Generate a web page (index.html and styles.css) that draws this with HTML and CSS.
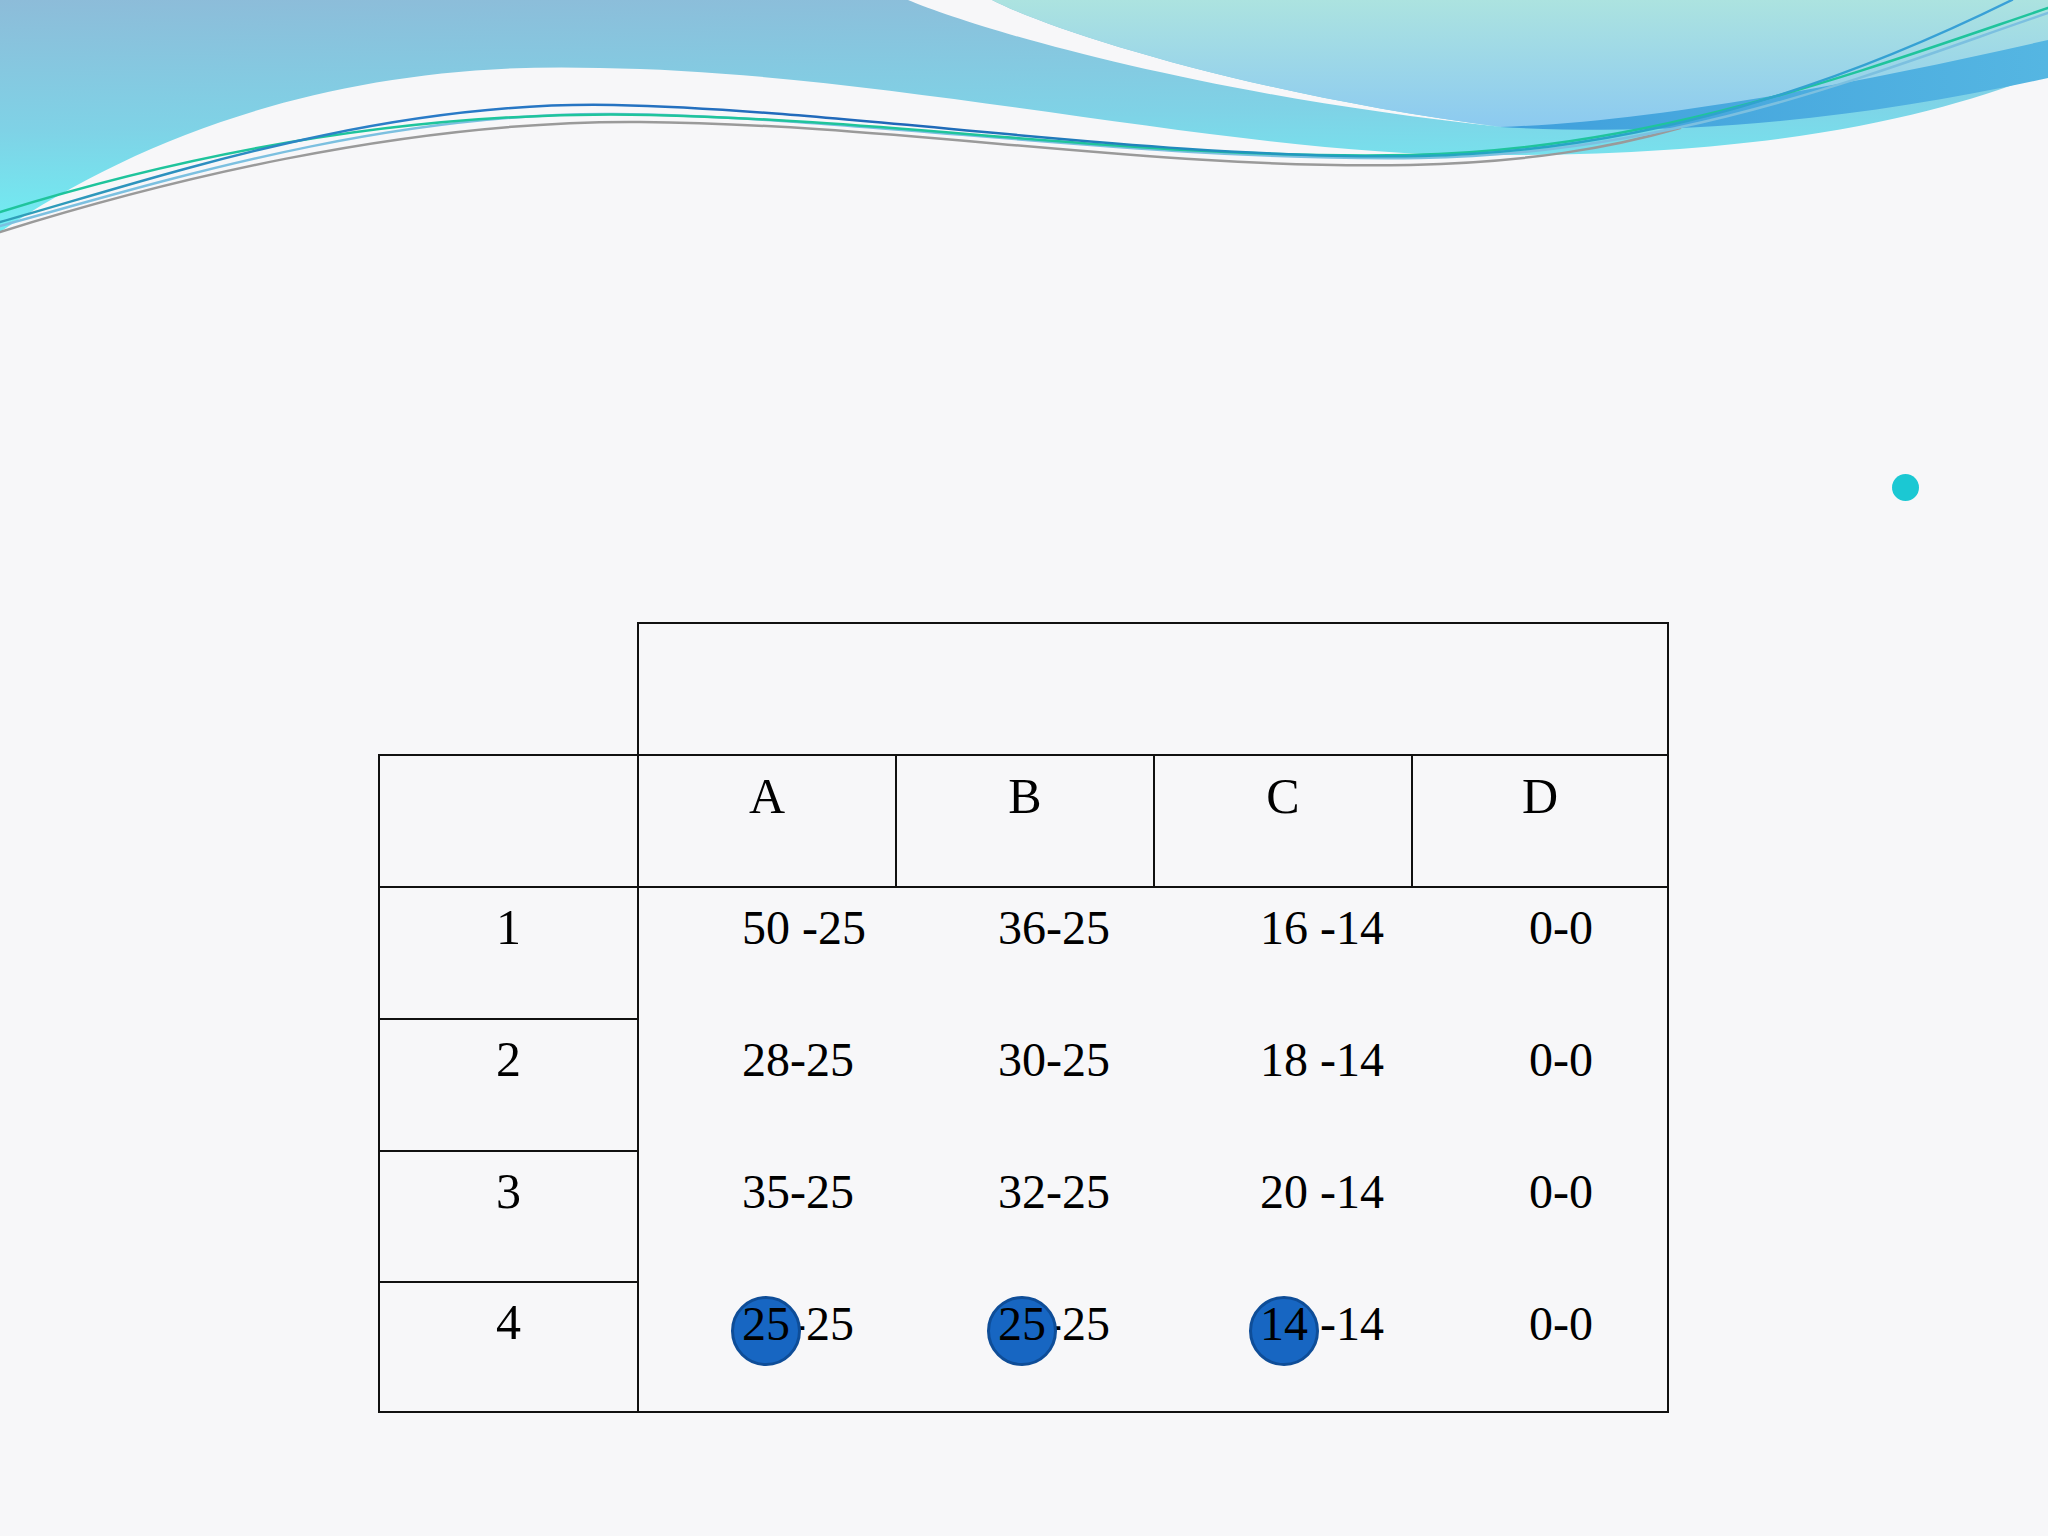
FILE: index.html
```html
<!DOCTYPE html>
<html>
<head>
<meta charset="utf-8">
<link rel="stylesheet" href="styles.css">
</head>
<body>
<svg class="wave" viewBox="0 0 2048 260" width="2048" height="260" xmlns="http://www.w3.org/2000/svg">
  <defs>
    <linearGradient id="gA" x1="0" y1="0" x2="0.15" y2="1">
      <stop offset="0" stop-color="#8dbcd9"/>
      <stop offset="0.55" stop-color="#7fd2e6"/>
      <stop offset="1" stop-color="#6ff0f4"/>
    </linearGradient>
    <linearGradient id="gR" x1="0" y1="0" x2="0" y2="1">
      <stop offset="0" stop-color="#ace3e0"/>
      <stop offset="1" stop-color="#8ccaf0"/>
    </linearGradient>
    <linearGradient id="gRib" x1="0" y1="0" x2="1" y2="0">
      <stop offset="0" stop-color="#3f9fdc"/>
      <stop offset="1" stop-color="#55b6e2"/>
    </linearGradient>
    <linearGradient id="gL1" x1="0" y1="0" x2="1" y2="0">
      <stop offset="0" stop-color="#2fa0b8"/>
      <stop offset="0.2" stop-color="#2a7cc8"/>
      <stop offset="0.45" stop-color="#1f66b8"/>
      <stop offset="0.7" stop-color="#22a6c0"/>
      <stop offset="1" stop-color="#3aa0d8"/>
    </linearGradient>
  </defs>
  <path fill="url(#gA)" d="M0,0 H2048 V72 C1950,110 1800,155 1500,155 C1250,160 900,72 600,68 C350,60 150,130 0,232 Z"/>
  <path fill="#f7f7f9" d="M908,0 H992 C1050,30 1250,95 1502,127 C1200,95 980,30 908,0 Z"/>
  <path fill="url(#gR)" d="M992,0 H2048 V50 C1880,95 1700,128 1502,127 C1250,95 1050,30 992,0 Z"/>
  <path fill="url(#gRib)" d="M1500,127 C1650,122 1850,85 2048,40 V78 C1880,115 1700,138 1500,127 Z"/>
  <g fill="none" stroke-linecap="round">
    <path stroke="#9a9a9a" stroke-width="2.5" d="M0,232 C150,185 400,120 640,122 C900,124 1150,170 1410,165 C1530,162 1610,148 1680,128"/>
    <path stroke="#7cc0e0" stroke-width="2.5" d="M0,226 C150,185 380,112 614,114 C850,116 1150,162 1420,158 C1680,154 1880,70 2048,13"/>
    <path stroke="#1fc49c" stroke-width="2.5" d="M0,212 C200,150 420,110 650,115 C900,120 1150,160 1410,155 C1650,150 1850,75 2048,8"/>
    <path stroke="url(#gL1)" stroke-width="2.5" d="M0,222 C150,180 380,100 614,105 C850,110 1150,160 1420,156 C1650,152 1850,80 2012,0"/>
  </g>
</svg>

<div class="bullet-row"><span class="dot"></span></div>

<div class="table">
  <div class="corner"></div>
  <div class="head"></div>

  <div class="side side-top"></div>
  <div class="col">A</div>
  <div class="col">B</div>
  <div class="col">C</div>
  <div class="col col-last">D</div>

  <div class="side side-r1">1</div>
  <div class="side">2</div>
  <div class="side">3</div>
  <div class="side side-last">4</div>

  <div class="data">
    <div class="v v-r1 v-a">50 -25</div>
    <div class="v v-r1 v-b">36-25</div>
    <div class="v v-r1 v-c">16 -14</div>
    <div class="v v-r1 v-d">0-0</div>

    <div class="v v-a">28-25</div>
    <div class="v v-b">30-25</div>
    <div class="v v-c">18 -14</div>
    <div class="v v-d">0-0</div>

    <div class="v v-a">35-25</div>
    <div class="v v-b">32-25</div>
    <div class="v v-c">20 -14</div>
    <div class="v v-d">0-0</div>

    <div class="v v-r4 v-a"><span class="hit">25</span>-25</div>
    <div class="v v-r4 v-b"><span class="hit">25</span>-25</div>
    <div class="v v-r4 v-c"><span class="hit">14</span> -14</div>
    <div class="v v-r4 v-d">0-0</div>
  </div>
</div>
</body>
</html>
```

FILE: styles.css
```css
html, body {
  margin: 0;
  padding: 0;
}
body {
  width: 2048px;
  height: 1536px;
  overflow: hidden;
  background: #f7f7f9;
  font-family: "Liberation Serif", "Times New Roman", serif;
  color: #000;
}
.wave {
  display: block;
}
.bullet-row {
  margin-top: 214px;
  padding-left: 1892px;
  height: 27px;
}
.dot {
  display: block;
  width: 27px;
  height: 27px;
  border-radius: 50%;
  background: #1bc8d3;
}
.table {
  margin-top: 121px;
  margin-left: 378px;
  display: grid;
  grid-template-columns: 259px 258px 258px 258px 258px;
  grid-template-rows: 132px 132px 132px 132px 131px 132px;
  width: 1291px;
}
.table > div {
  box-sizing: border-box;
}
.corner {
  grid-column: 1;
  grid-row: 1;
}
.head {
  grid-column: 2 / 6;
  grid-row: 1;
  border: 2px solid #111;
  border-bottom: none;
}
.col {
  border-top: 2px solid #111;
  border-left: 2px solid #111;
  text-align: center;
  font-size: 50px;
  line-height: 1;
  padding-top: 15px;
}
.col-last {
  border-right: 2px solid #111;
}
.side {
  grid-column: 1;
  border-top: 2px solid #111;
  border-left: 2px solid #111;
  text-align: center;
  font-size: 50px;
  line-height: 1;
  padding-top: 14px;
}
.side-top {
  grid-row: 2;
}
.side-r1 {
  grid-row: 3;
}
.side-last {
  border-bottom: 2px solid #111;
}
.data {
  grid-column: 2 / 6;
  grid-row: 3 / 7;
  border: 2px solid #111;
  display: grid;
  grid-template-columns: 256px 258px 258px 256px;
  grid-template-rows: 130px 132px 131px 130px;
}
.v {
  font-size: 48px;
  line-height: 1;
  padding-top: 18px;
  white-space: pre;
}
.v-r1 {
  padding-top: 16px;
}
.v-r4 {
  padding-top: 19px;
}
.v-a { padding-left: 103px; }
.v-b { padding-left: 103px; }
.v-c { padding-left: 107px; }
.v-d { padding-left: 118px; }
.hit {
  position: relative;
  z-index: 0;
}
.hit::before {
  content: "";
  position: absolute;
  z-index: -1;
  left: 50%;
  top: -1px;
  width: 70px;
  height: 70px;
  margin-left: -35px;
  box-sizing: border-box;
  border-radius: 50%;
  background: #1766c2;
  border: 3px solid #0e4d98;
}
```
